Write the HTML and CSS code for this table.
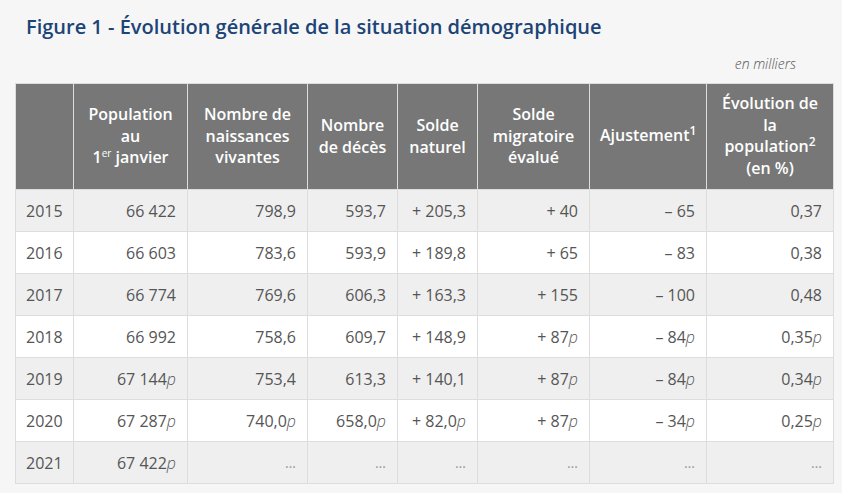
FILE: index.html
```html
<!DOCTYPE html>
<html lang="fr">
<head>
<meta charset="utf-8">
<title>Figure 1</title>
<link rel="stylesheet" href="styles.css">
</head>
<body>
<div class="page">
  <h1 class="title">Figure 1 - Évolution générale de la situation démographique</h1>
  <p class="unit">en milliers</p>
  <table class="data">
    <colgroup>
      <col class="c1"><col class="c2"><col class="c3"><col class="c4"><col class="c5"><col class="c6"><col class="c7"><col class="c8">
    </colgroup>
    <thead>
      <tr>
        <th></th>
        <th>Population<br>au<br>1<sup class="er">er</sup> janvier</th>
        <th>Nombre de naissances vivantes</th>
        <th>Nombre de décès</th>
        <th>Solde naturel</th>
        <th>Solde migratoire évalué</th>
        <th>Ajustement<sup>1</sup></th>
        <th>Évolution de la population<sup>2</sup> (en&nbsp;%)</th>
      </tr>
    </thead>
    <tbody>
      <tr class="alt"><td>2015</td><td>66&nbsp;422</td><td>798,9</td><td>593,7</td><td>+&nbsp;205,3</td><td>+&nbsp;40</td><td>–&nbsp;65</td><td>0,37</td></tr>
      <tr><td>2016</td><td>66&nbsp;603</td><td>783,6</td><td>593,9</td><td>+&nbsp;189,8</td><td>+&nbsp;65</td><td>–&nbsp;83</td><td>0,38</td></tr>
      <tr class="alt"><td>2017</td><td>66&nbsp;774</td><td>769,6</td><td>606,3</td><td>+&nbsp;163,3</td><td>+&nbsp;155</td><td>–&nbsp;100</td><td>0,48</td></tr>
      <tr><td>2018</td><td>66&nbsp;992</td><td>758,6</td><td>609,7</td><td>+&nbsp;148,9</td><td>+&nbsp;87<i>p</i></td><td>–&nbsp;84<i>p</i></td><td>0,35<i>p</i></td></tr>
      <tr class="alt"><td>2019</td><td>67&nbsp;144<i>p</i></td><td>753,4</td><td>613,3</td><td>+&nbsp;140,1</td><td>+&nbsp;87<i>p</i></td><td>–&nbsp;84<i>p</i></td><td>0,34<i>p</i></td></tr>
      <tr><td>2020</td><td>67&nbsp;287<i>p</i></td><td>740,0<i>p</i></td><td>658,0<i>p</i></td><td>+&nbsp;82,0<i>p</i></td><td>+&nbsp;87<i>p</i></td><td>–&nbsp;34<i>p</i></td><td>0,25<i>p</i></td></tr>
      <tr class="alt"><td>2021</td><td>67&nbsp;422<i>p</i></td><td class="na">…</td><td class="na">…</td><td class="na">…</td><td class="na">…</td><td class="na">…</td><td class="na">…</td></tr>
    </tbody>
  </table>
</div>
</body>
</html>
```
FILE: styles.css
```css
html, body {
  margin: 0;
  padding: 0;
  background: #f6f6f6;
}
body {
  font-family: "Open Sans", "Noto Sans", "Liberation Sans", sans-serif;
  color: #555;
}
.page {
  padding: 13px 9px 0 15px;
}
.title {
  margin: 0 0 0 11px;
  font-size: 20px;
  line-height: 27px;
  font-weight: 600;
  color: #1c4476;
}
.unit {
  margin: 14px 37px 0 0;
  text-align: right;
  font-size: 14px;
  line-height: 19px;
  font-style: italic;
  font-weight: 300;
  color: #555;
}
.data {
  margin-top: 10px;
  width: 818px;
  border-collapse: collapse;
  table-layout: fixed;
  font-size: 16px;
}
.c1 { width: 58px; }
.c2 { width: 114px; }
.c3 { width: 120px; }
.c4 { width: 90px; }
.c5 { width: 80px; }
.c6 { width: 112px; }
.c7 { width: 117px; }
.c8 { width: 127px; }
.data th {
  background: #777;
  color: #fff;
  font-weight: 600;
  font-size: 16px;
  line-height: 21.7px;
  text-align: center;
  vertical-align: middle;
  border: 1px solid #ddd;
  padding: 6px 10px;
  height: 93px;
}
.data th sup {
  font-size: 12px;
  line-height: 1;
}
.data th sup.er {
  font-size: 10px;
  font-weight: 400;
  line-height: 0;
}
.data td {
  border: 1px solid #ddd;
  padding: 10px 11px 9px 10px;
  line-height: 22px;
  text-align: right;
  white-space: nowrap;
  background: #fff;
}
.data tr.alt td {
  background: #efefef;
}
.data td:first-child {
  text-align: left;
}
.data td i {
  font-style: italic;
  font-weight: 300;
}
.data td.na {
  color: #999;
  font-size: 14px;
}
```
